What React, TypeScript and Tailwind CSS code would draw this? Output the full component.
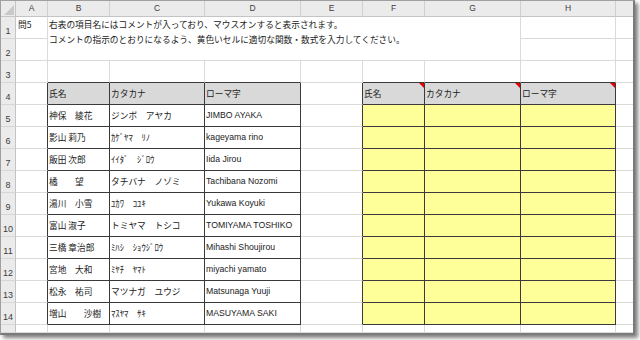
import React from "react";

const JP = "font-['Noto_Sans_CJK_JP',sans-serif]";
const LAT = "font-['Liberation_Sans','Noto_Sans_CJK_JP',sans-serif]";

const data: [string, string, string][] = [
  ["神保　綾花", "ジンボ　アヤカ", "JIMBO AYAKA"],
  ["影山 莉乃", "ｶｹﾞﾔﾏ　ﾘﾉ", "kageyama rino"],
  ["飯田 次郎", "ｲｲﾀﾞ　ｼﾞﾛｳ", "Iida Jirou"],
  ["橘　　望", "タチバナ　ノゾミ", "Tachibana Nozomi"],
  ["湯川　小雪", "ﾕｶﾜ　ｺﾕｷ", "Yukawa Koyuki"],
  ["富山 淑子", "トミヤマ　トシコ", "TOMIYAMA TOSHIKO"],
  ["三橋 章治郎", "ﾐﾊｼ　ｼｮｳｼﾞﾛｳ", "Mihashi Shoujirou"],
  ["宮地　大和", "ﾐﾔﾁ　ﾔﾏﾄ", "miyachi yamato"],
  ["松永　祐司", "マツナガ　ユウジ", "Matsunaga Yuuji"],
  ["増山　　沙樹", "ﾏｽﾔﾏ　ｻｷ", "MASUYAMA SAKI"],
];

const headers = ["氏名", "カタカナ", "ローマ字"];
const colLetters = ["A", "B", "C", "D", "E", "F", "G", "H", ""];

const inT = (r: number, c: number) =>
  r >= 4 && r <= 14 && ((c >= 2 && c <= 4) || (c >= 6 && c <= 8));

function RowHeader({ label }: { label: string }) {
  return (
    <div className="flex items-end justify-center pb-[2px] bg-[#ebebeb] border-r border-b border-r-[#c4c4c4] border-b-[#d6d6d6] text-[9px] leading-none text-[#3c3c3c] font-['Liberation_Sans',sans-serif]">
      {label}
    </div>
  );
}

function Cell({ r, c }: { r: number; c: number }) {
  const rd = inT(r, c) || inT(r, c + 1);
  const bd = inT(r, c) || inT(r + 1, c);
  const last = c === 9;
  let bg = "bg-white";
  if (r === 4 && inT(r, c)) bg = "bg-[#d9d9d9]";
  else if (r >= 5 && inT(r, c) && c >= 6) bg = "bg-[#ffff99]";

  let content: React.ReactNode = null;
  let font = JP;
  if (r === 4 && inT(r, c)) {
    const idx = c >= 6 ? c - 6 : c - 2;
    content = headers[idx];
  } else if (r >= 5 && r <= 14 && c >= 2 && c <= 4) {
    content = data[r - 5][c - 2];
    if (c === 4) font = LAT;
  }
  const comment = r === 4 && c >= 6 && c <= 8;

  return (
    <div
      className={`relative flex items-center pl-[1px] overflow-hidden whitespace-pre ${bg} ${font} text-[8.7px] text-[#222222] ${
        last ? "" : "border-r"
      } border-b ${rd ? "border-r-[#3a3a3a]" : "border-r-[#dadada]"} ${
        bd ? "border-b-[#3a3a3a]" : "border-b-[#dadada]"
      }`}
    >
      {content}
      {comment && (
        <span className="absolute top-0 right-0 w-0 h-0 border-t-[5px] border-l-[5px] border-t-[#e00000] border-l-transparent" />
      )}
    </div>
  );
}

export default function App() {
  const cells: React.ReactNode[] = [];

  cells.push(
    <div
      key="corner"
      className="relative bg-[#ebebeb] border-r border-b border-r-[#c4c4c4] border-b-[#c4c4c4]"
    >
      <svg className="absolute right-[1px] bottom-[1px]" width="10" height="10" viewBox="0 0 10 10">
        <polygon points="10,0 10,10 0,10" fill="#c9c9c9" />
      </svg>
    </div>
  );
  colLetters.forEach((l, i) => {
    cells.push(
      <div
        key={`h${i}`}
        className={`flex items-center justify-center bg-[#ebebeb] border-b border-b-[#c4c4c4] ${
          i === 8 ? "" : "border-r border-r-[#d0d0d0]"
        } text-[8.5px] leading-none text-[#3c3c3c] font-['Liberation_Sans',sans-serif]`}
      >
        {l}
      </div>
    );
  });

  cells.push(<RowHeader key="rh1" label="1" />);
  cells.push(
    <div
      key="a1"
      className={`pl-[2px] bg-white border-r border-b border-r-[#dadada] border-b-[#dadada] ${JP} text-[8.7px] leading-[15px] text-[#222222]`}
    >
      問5
    </div>
  );
  cells.push(
    <div
      key="merged"
      className={`col-span-6 row-span-2 pl-[1px] bg-white border-r border-b border-r-[#dadada] border-b-[#dadada] ${JP} text-[8.7px] leading-[15px] text-[#222222] whitespace-nowrap overflow-hidden`}
    >
      <div>右表の項目名にはコメントが入っており、マウスオンすると表示されます。</div>
      <div>コメントの指示のとおりになるよう、黄色いセルに適切な関数・数式を入力してください。</div>
    </div>
  );
  cells.push(<Cell key="h1c" r={1} c={8} />);
  cells.push(<Cell key="i1c" r={1} c={9} />);

  cells.push(<RowHeader key="rh2" label="2" />);
  cells.push(<Cell key="a2" r={2} c={1} />);
  cells.push(<Cell key="h2c" r={2} c={8} />);
  cells.push(<Cell key="i2c" r={2} c={9} />);

  for (let r = 3; r <= 15; r++) {
    cells.push(<RowHeader key={`rh${r}`} label={r <= 14 ? String(r) : ""} />);
    for (let c = 1; c <= 9; c++) {
      cells.push(<Cell key={`c${r}-${c}`} r={r} c={c} />);
    }
  }

  return (
    <div className="w-[640px] h-[340px] bg-white">
      <div className="w-[635px] h-[335px] border-t border-l border-r-2 border-b-2 border-t-[#a0a0a0] border-l-[#a0a0a0] border-r-[#7a7a7a] border-b-[#7a7a7a] shadow-[3px_3px_4px_rgba(0,0,0,0.5)] overflow-hidden bg-white">
        <div className="grid grid-cols-[15px_32px_62px_95px_96px_62px_62px_96px_95px_17px] grid-rows-[16px_repeat(14,22px)_8px]">
          {cells}
        </div>
      </div>
    </div>
  );
}
